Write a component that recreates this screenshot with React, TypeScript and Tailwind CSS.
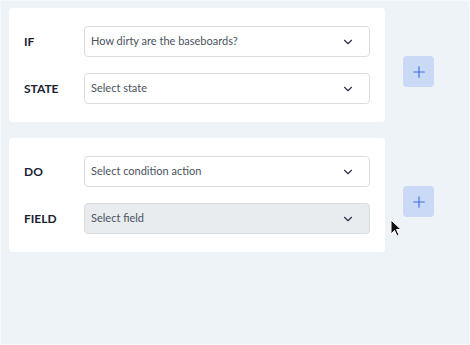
import { ChevronDown, Plus } from 'lucide-react';

type Field = { label: string; placeholder: string; disabled?: boolean };

const groups: Field[][] = [
  [
    { label: 'IF', placeholder: 'How dirty are the baseboards?' },
    { label: 'STATE', placeholder: 'Select state' },
  ],
  [
    { label: 'DO', placeholder: 'Select condition action' },
    { label: 'FIELD', placeholder: 'Select field', disabled: true },
  ],
];

function SelectRow({ field }: { field: Field }) {
  return (
    <div className="flex items-center">
      <span className="w-[60px] text-[12px] font-bold text-[#1a2233]">{field.label}</span>
      <div
        className={`flex h-[31px] w-[286px] items-center justify-between rounded-[4px] border border-[#d9dde2] pl-[6px] pr-[14px] ${
          field.disabled ? 'bg-[#e9ecef]' : 'bg-white'
        }`}
      >
        <span className="text-[11px] text-[#4a5260]">{field.placeholder}</span>
        <ChevronDown size={14} strokeWidth={2} className="text-[#2d3646]" />
      </div>
    </div>
  );
}

export default function App() {
  return (
    <div
      className="relative h-[345px] w-[470px] border border-[#f6f8fb] bg-[#eef3f8] pl-[8px] pt-[7px]"
      style={{ fontFamily: 'Lato, "Open Sans", sans-serif' }}
    >
      <div className="flex flex-col gap-[16px]">
        {groups.map((group, i) => (
          <div key={i} className="flex items-start">
            <div className="flex w-[376px] flex-col gap-[16px] rounded-[4px] bg-white px-[15px] py-[18px]">
              {group.map((f) => (
                <SelectRow key={f.label} field={f} />
              ))}
            </div>
            {/* add row button */}
            <button className="ml-[18px] mt-[48px] flex h-[31px] w-[31px] items-center justify-center rounded-[4px] bg-[#c9d9f6] text-[#3d6fe3]">
              <Plus size={18} strokeWidth={1.5} />
            </button>
          </div>
        ))}
      </div>

      {/* mouse cursor */}
      <svg className="absolute left-[389px] top-[218px]" width="12" height="18" viewBox="0 0 12 18">
        <path d="M1 1v14l3.5-3.5 2.5 5.5 2-1-2.5-5.5H11z" fill="#111" stroke="#fff" strokeWidth="1" />
      </svg>
    </div>
  );
}
